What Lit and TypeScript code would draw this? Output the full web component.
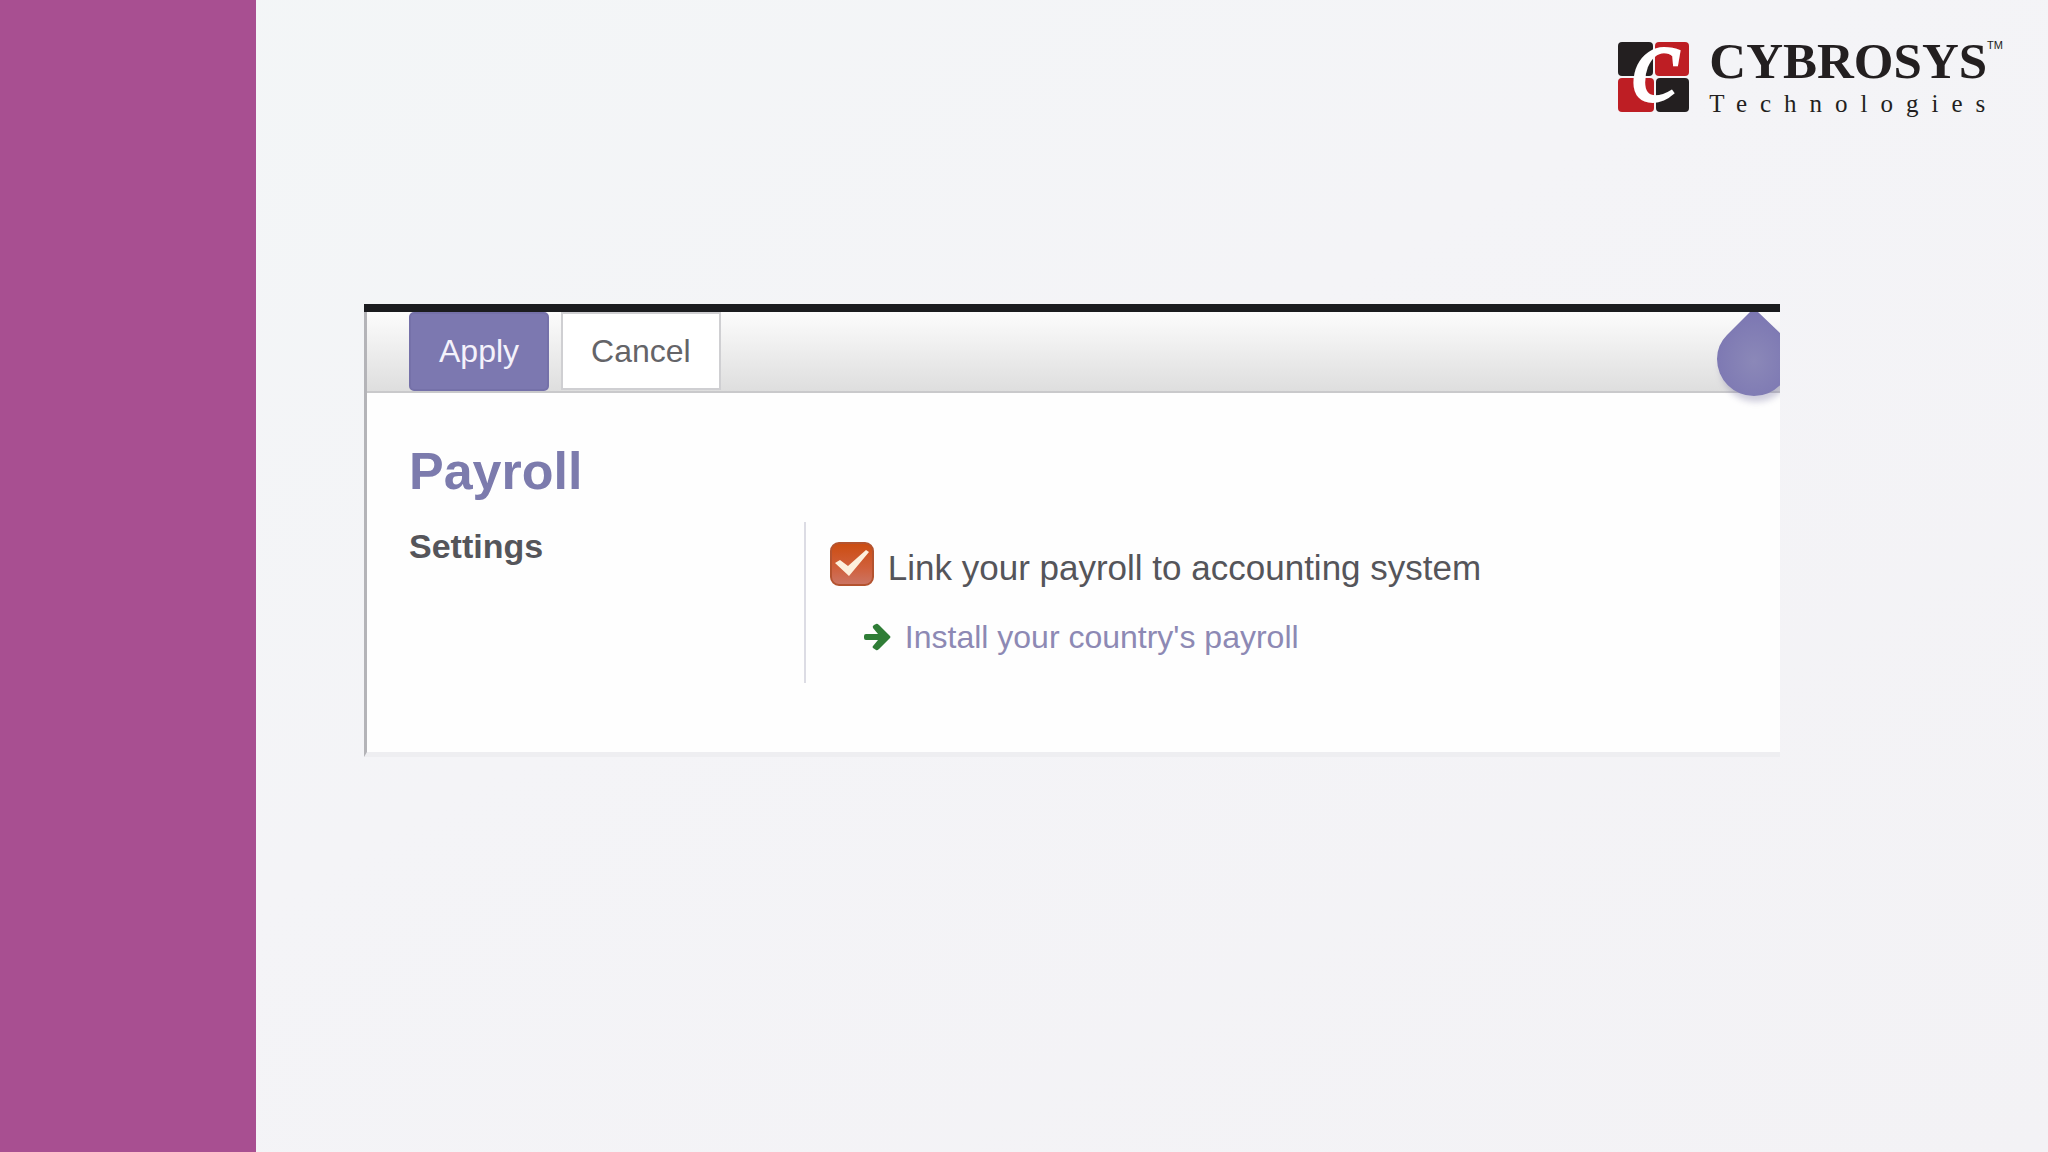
import { LitElement, html, css } from "lit";
import { customElement, state } from "lit/decorators.js";

@customElement("brand-logo")
export class BrandLogo extends LitElement {
  static styles = css`
    :host {
      display: flex;
      gap: 19px;
      color: #231f20;
      font-family: "Liberation Serif", "Times New Roman", serif;
    }
    .mark {
      display: block;
      width: 72px;
      height: 72px;
      overflow: visible;
    }
    .initial {
      font-family: "Liberation Serif", serif;
      font-size: 112px;
      font-style: italic;
      fill: #fff;
      stroke: #fff;
      stroke-width: 2px;
    }
    .words {
      display: flex;
      flex-direction: column;
    }
    .top {
      display: flex;
      align-items: flex-start;
    }
    .name {
      font-size: 51px;
      font-weight: 700;
      line-height: 40px;
    }
    .tm {
      font-family: "Liberation Sans", Arial, sans-serif;
      font-size: 11px;
      line-height: 8px;
    }
    .sub {
      font-size: 25px;
      line-height: 28px;
      letter-spacing: 13px;
      padding-top: 9px;
    }
  `;

  render() {
    return html`
      <svg class="mark" viewBox="0 0 72 72" aria-hidden="true">
        <rect x="0" y="1" width="35" height="34" rx="4" fill="#231f20" />
        <rect x="37" y="1" width="34" height="34" rx="4" fill="#be1e24" />
        <rect x="0" y="37" width="36" height="34" rx="4" fill="#be1e24" />
        <rect x="38" y="37" width="33" height="34" rx="4" fill="#231f20" />
        <text class="initial" x="13" y="60">c</text>
      </svg>
      <div class="words">
        <div class="top">
          <span class="name">CYBROSYS</span><span class="tm">TM</span>
        </div>
        <span class="sub">Technologies</span>
      </div>
    `;
  }
}

@customElement("settings-panel")
export class SettingsPanel extends LitElement {
  static styles = css`
    :host {
      display: block;
      position: relative;
      overflow: hidden;
      font-family: "Liberation Sans", Arial, sans-serif;
      color: #55555a;
      background: #fefefe;
      border-top: 8px solid #1b1c1f;
    }
    .frame {
      border-left: 3px solid #b4b4b8;
      border-bottom: 5px solid #eeeef1;
    }
    .toolbar {
      display: flex;
      align-items: flex-start;
      gap: 12px;
      padding: 0 42px;
      height: 79px;
      border-bottom: 2px solid #c9c9cb;
      background: linear-gradient(#fcfcfc, #dedede);
    }
    .btn {
      box-sizing: border-box;
      height: 79px;
      padding: 0 28px;
      border: 2px solid #7571a9;
      border-radius: 5px;
      font: inherit;
      font-size: 32px;
      line-height: 75px;
      color: #f4f2fb;
      background: #7c78b0;
    }
    .plain {
      height: 78px;
      border-color: #cfcfd2;
      border-radius: 0;
      color: #646468;
      background: #fff;
    }
    .body {
      padding: 50px 55px 69px 42px;
    }
    .title {
      margin: 0 0 23px;
      font-size: 52px;
      line-height: 56px;
      color: #7c7bad;
    }
    .group {
      display: grid;
      grid-template-columns: 3fr 7fr;
    }
    .heading {
      margin: 0;
      padding-top: 4px;
      font-size: 34px;
      line-height: 40px;
    }
    .options {
      border-left: 2px solid #dcdce4;
      padding: 20px 0 26px 24px;
    }
    .option {
      display: flex;
      align-items: flex-start;
      gap: 14px;
      font-size: 35px;
      line-height: 52px;
    }
    .tick {
      display: grid;
      flex: none;
    }
    .tick > * {
      grid-area: 1 / 1;
    }
    .box {
      appearance: none;
      box-sizing: border-box;
      width: 44px;
      height: 44px;
      margin: 0;
      border: 2px solid #b4532f;
      border-radius: 9px;
      background: #fff;
    }
    .box:checked {
      background: linear-gradient(#cc4d12, #d0603c 60%, #cc7462);
    }
    .check {
      width: 44px;
      height: 44px;
      pointer-events: none;
    }
    .box:not(:checked) + .check {
      visibility: hidden;
    }
    .install {
      display: flex;
      align-items: center;
      gap: 14px;
      padding: 23px 0 0 34px;
      font-size: 32px;
      line-height: 40px;
    }
    .arrow {
      flex: none;
      width: 27px;
      height: 28px;
    }
    .link {
      color: #8d89b4;
      text-decoration: none;
    }
    .drop {
      position: absolute;
      top: -6px;
      right: -17px;
      width: 86px;
      height: 104px;
    }
  `;

  @state() private linked = true;

  private toggle(e: Event) {
    this.linked = (e.target as HTMLInputElement).checked;
  }

  render() {
    return html`
      <div class="frame">
        <div class="toolbar">
          <button class="btn" type="button">Apply</button>
          <button class="btn plain" type="button">Cancel</button>
        </div>
        <div class="body">
          <h1 class="title">Payroll</h1>
          <div class="group">
            <h2 class="heading">Settings</h2>
            <div class="options">
              <div class="option">
                <span class="tick">
                  <input
                    class="box"
                    id="link-payroll"
                    type="checkbox"
                    .checked=${this.linked}
                    @change=${this.toggle}
                  />
                  <svg class="check" viewBox="0 0 44 44" aria-hidden="true">
                    <path d="M5 21 L10 18 L18 24 L36 8 L39 10 L19 34 Z" fill="#fdf0dc" />
                  </svg>
                </span>
                <label for="link-payroll">Link your payroll to accounting system</label>
              </div>
              <div class="install">
                <svg class="arrow" viewBox="0 0 27 28" aria-hidden="true">
                  <path
                    d="M2 11 H14 L9 5 Q8 3 10 2 L12 1 Q13 0 15 2 L26 13 Q27 14 26 15 L15 26 Q13 28 12 27 L9 25 Q8 24 9 23 L14 17 H2 Q0 17 0 15 V13 Q0 11 2 11 Z"
                    fill="#2f7d36"
                  />
                </svg>
                <a class="link" href="#install">Install your country's payroll</a>
              </div>
            </div>
          </div>
        </div>
      </div>
      <svg class="drop" viewBox="0 0 86 104" aria-hidden="true">
        <defs>
          <radialGradient id="fill" cx="0.5" cy="0.6" r="0.6">
            <stop offset="0" stop-color="#8b88b8" />
            <stop offset="1" stop-color="#7b76b2" />
          </radialGradient>
          <filter id="soft" x="-20%" y="-20%" width="140%" height="140%">
            <feGaussianBlur stdDeviation="3" />
          </filter>
        </defs>
        <ellipse cx="45" cy="60" rx="36" ry="36" fill="#77739f" opacity="0.35" filter="url(#soft)" />
        <path
          d="M43 3 Q45 3 47 6 L70 28 Q80 39 80 53 A37 37 0 0 1 6 53 Q6 39 16 29 L39 6 Q41 3 43 3 Z"
          fill="url(#fill)"
        />
      </svg>
    `;
  }
}

@customElement("app-root")
export class AppRoot extends LitElement {
  static styles = css`
    :host {
      display: flex;
      min-height: 100vh;
      background: linear-gradient(150deg, #f3f6f7, #f4f4f7 45%, #f3f2f5);
    }
    .band {
      flex: none;
      width: 12.5%;
      background: #a84f91;
    }
    .slide {
      flex: 1;
      min-width: 0;
    }
    .header {
      display: flex;
      justify-content: flex-end;
      padding: 41px 45px 0 0;
    }
    .content {
      padding: 186px 268px 0 108px;
    }
  `;

  render() {
    return html`
      <div class="band"></div>
      <main class="slide">
        <header class="header"><brand-logo></brand-logo></header>
        <div class="content"><settings-panel></settings-panel></div>
      </main>
    `;
  }
}
